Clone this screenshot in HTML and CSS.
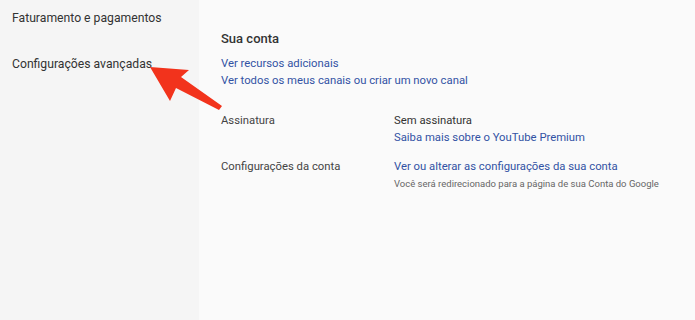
FILE: index.html
```html
<!DOCTYPE html>
<html lang="pt-BR">
<head>
<meta charset="utf-8">
<link rel="stylesheet" href="styles.css">
</head>
<body>
<div class="page">
  <nav class="sidebar">
    <div class="nav-item">Faturamento e pagamentos</div>
    <div class="nav-item">Configurações avançadas</div>
  </nav>
  <main class="main">
    <h2 class="section-title">Sua conta</h2>
    <div class="links">
      <a class="link">Ver recursos adicionais</a>
      <a class="link">Ver todos os meus canais ou criar um novo canal</a>
    </div>
    <div class="row row-sub">
      <div class="label">Assinatura</div>
      <div class="value">
        <div class="plain">Sem assinatura</div>
        <a class="link">Saiba mais sobre o YouTube Premium</a>
      </div>
    </div>
    <div class="row row-acct">
      <div class="label">Configurações da conta</div>
      <div class="value">
        <a class="link">Ver ou alterar as configurações da sua conta</a>
        <div class="note">Você será redirecionado para a página de sua Conta do Google</div>
      </div>
    </div>
  </main>
  <svg class="arrow" width="695" height="320" viewBox="0 0 695 320">
    <polygon points="150,67 189,70 181,77 222,106 219,110 176,88 170,101" fill="#f2331c"/>
  </svg>
</div>
</body>
</html>
```
FILE: styles.css
```css
html, body {
  margin: 0;
  padding: 0;
  width: 695px;
  height: 320px;
  overflow: hidden;
  font-family: Roboto, "Liberation Sans", Arial, sans-serif;
  color: #333;
}
.page {
  position: relative;
  display: flex;
  width: 695px;
  height: 320px;
}
.sidebar {
  width: 199px;
  flex: none;
  background: #f5f5f5;
  padding-top: 10px;
  box-sizing: border-box;
}
.nav-item {
  font-size: 12.2px;
  line-height: 16px;
  padding-left: 12px;
  color: #333;
  margin-bottom: 30px;
}
.main {
  flex: 1;
  background: #fafafa;
  padding: 31px 0 0 22px;
}
.section-title {
  margin: 0;
  font-size: 13px;
  line-height: 16px;
  font-weight: 500;
  color: #333;
}
.links {
  display: flex;
  flex-direction: column;
  margin-top: 8px;
}
.link {
  font-size: 11.3px;
  line-height: 17px;
  color: #3252a4;
  text-decoration: none;
}
.row {
  display: flex;
}
.row-sub {
  margin-top: 23px;
}
.row-acct {
  margin-top: 12px;
}
.label {
  width: 173px;
  font-size: 11.3px;
  line-height: 17px;
  color: #444;
}
.value {
  display: flex;
  flex-direction: column;
}
.plain {
  font-size: 11.3px;
  line-height: 17px;
  color: #333;
}
.note {
  font-size: 9.5px;
  line-height: 14px;
  margin-top: 2px;
  color: #666;
}
.arrow {
  position: absolute;
  left: 0;
  top: 0;
  pointer-events: none;
}
```
